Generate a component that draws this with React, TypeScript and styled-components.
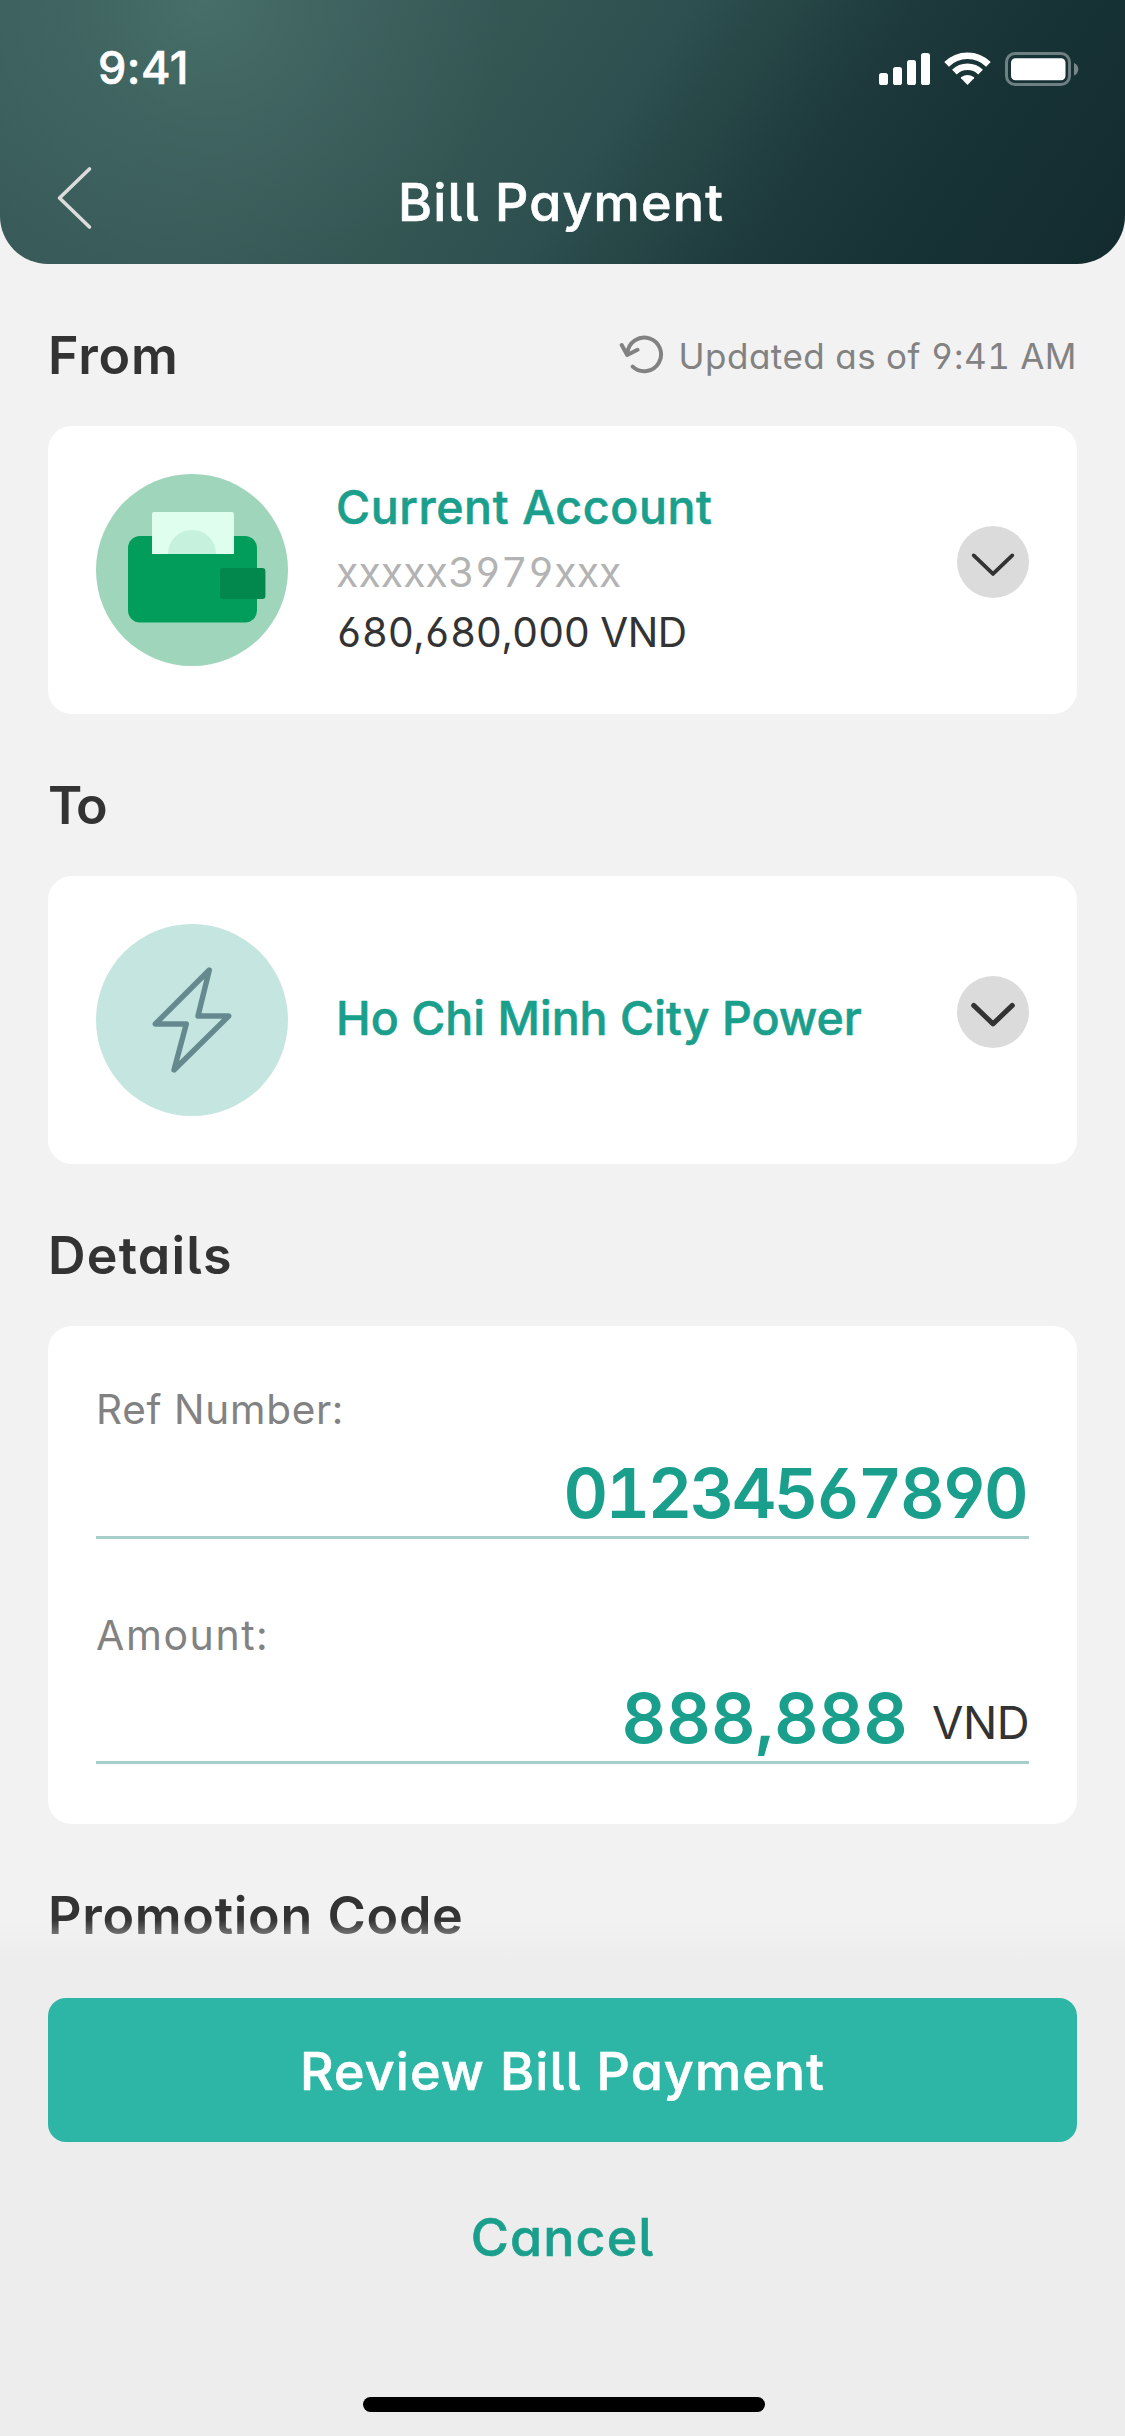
import React from "react";
import styled, { createGlobalStyle } from "styled-components";

const GlobalStyle = createGlobalStyle`
  * { box-sizing: border-box; }
  body { margin: 0; background: #f2f2f2; }
`;

const Screen = styled.div`
  position: relative;
  display: flex;
  flex-direction: column;
  width: 1125px;
  height: 2436px;
  overflow: hidden;
  background: #f2f2f2;
  color: #333333;
  font-family: Inter, "Liberation Sans", sans-serif;
  font-feature-settings: "cv03", "cv04", "cv05", "cv11", "tnum";
`;

interface TextProps {
  $size: number;
  $weight?: number;
  $color?: string;
  $track?: number;
  $line?: number;
}

const Text = styled.span<TextProps>`
  display: block;
  white-space: nowrap;
  font-size: ${(p) => p.$size}px;
  font-weight: ${(p) => p.$weight ?? 400};
  color: ${(p) => p.$color ?? "inherit"};
  letter-spacing: ${(p) => p.$track ?? 0}px;
  line-height: ${(p) => p.$line ?? 60}px;
`;

const Label = styled(Text).attrs({ $weight: 500 })`
  -webkit-text-stroke: 0.6px currentColor;
`;

const Header = styled.header`
  flex: none;
  height: 264px;
  border-radius: 0 0 48px 48px;
  background:
    radial-gradient(
      circle at 205px 0,
      rgba(110, 160, 145, 0.28) 0,
      rgba(110, 160, 145, 0.12) 140px,
      rgba(110, 160, 145, 0) 300px
    ),
    linear-gradient(
      124deg,
      #395d5b 0,
      #385a58 300px,
      #335653 460px,
      #2d4f4f 580px,
      #264545 665px,
      #1d393b 767px,
      #173336 870px,
      #132b2e 1080px
    );
`;

const StatusBar = styled.div`
  display: flex;
  justify-content: space-between;
  align-items: center;
  height: 138px;
  padding: 0 46px 0 98px;
`;

const Clock = styled(Label)`
  padding-bottom: 2px;
  font-feature-settings: normal;
`;

const StatusIcons = styled.div`
  display: flex;
  align-items: center;
  gap: 14px;
`;

const NavBar = styled.div`
  display: grid;
  grid-template-columns: 120px 1fr 120px;
  align-items: center;
  justify-items: center;
  height: 130px;
`;

const NavTitle = styled(Label)`
  margin-right: 3px;
`;

const BackButton = styled.button`
  display: flex;
  justify-self: start;
  margin-left: 56px;
  margin-bottom: 10px;
  padding: 0;
  border: 0;
  background: none;
`;

const Content = styled.main`
  display: flex;
  flex-direction: column;
  gap: 62px;
  padding: 62px 48px 0;
`;

const Section = styled.section`
  display: flex;
  flex-direction: column;
  gap: 40px;
`;

const SectionHead = styled.div`
  display: flex;
  justify-content: space-between;
  align-items: center;
  height: 60px;
`;

const SectionTitle = styled(Text).attrs({ as: "h2", $size: 52, $weight: 600 })`
  margin: 0;
`;

const Updated = styled.div`
  display: flex;
  align-items: center;
  gap: 14px;

  svg {
    margin-bottom: 4px;
  }
`;

const Card = styled.div`
  display: flex;
  align-items: center;
  gap: 48px;
  height: 288px;
  padding: 0 48px;
  border-radius: 24px;
  background: #ffffff;
`;

const CardBody = styled.div`
  flex: 1;
  padding-bottom: 4px;
`;

const Avatar = styled.div<{ $color: string }>`
  flex: none;
  width: 192px;
  height: 192px;
  border-radius: 50%;
  background: ${(p) => p.$color};
`;

const Expand = styled.button`
  flex: none;
  width: 72px;
  height: 72px;
  margin: 0 0 16px;
  padding: 0;
  border: 0;
  border-radius: 50%;
  background: #dbdbdb;
`;

const FormCard = styled.div`
  display: flex;
  flex-direction: column;
  gap: 60px;
  height: 498px;
  padding: 48px 48px 60px;
  border-radius: 24px;
  background: #ffffff;
`;

const Field = styled.div`
  height: 165px;
  border-bottom: 3px solid #a7cdc8;
`;

const FieldValue = styled.div`
  display: flex;
  justify-content: flex-end;
  align-items: flex-start;
  gap: 24px;
  padding-top: 2px;
`;

const RefValue = styled(Text)`
  padding-right: 3px;
`;

const Unit = styled(Text)`
  padding-top: 5px;
`;

const Footer = styled.footer`
  position: absolute;
  left: 0;
  right: 0;
  bottom: 0;
  display: flex;
  flex-direction: column;
  align-items: center;
  height: 516px;
  padding: 78px 48px 24px;
  background: linear-gradient(rgba(237, 237, 237, 0) 0, #ededed 42px);
`;

const PrimaryButton = styled.button`
  display: flex;
  align-items: center;
  justify-content: center;
  width: 100%;
  height: 144px;
  padding: 4px 0 0;
  border: 0;
  border-radius: 18px;
  background: #2db6a5;
  font: inherit;
  font-feature-settings: inherit;
`;

const CancelButton = styled.button`
  height: 96px;
  margin: 48px 0 0;
  padding: 0;
  border: 0;
  background: none;
  font: inherit;
  font-feature-settings: inherit;
`;

const HomeIndicator = styled.div`
  width: 402px;
  height: 15px;
  margin: auto 0 0 3px;
  border-radius: 8px;
  background: #000000;
`;

const SignalIcon = () => (
  <svg width="51" height="34" viewBox="0 0 51 34" fill="#fff">
    <rect x="0" y="21" width="9" height="12" rx="2.6" />
    <rect x="14" y="15" width="9" height="18" rx="2.6" />
    <rect x="28" y="8" width="9" height="25" rx="2.6" />
    <rect x="42" y="1" width="9" height="32" rx="2.6" />
  </svg>
);

const WifiIcon = () => (
  <svg width="47" height="34" viewBox="0 0 47 34" fill="none" stroke="#fff">
    <path d="M2.6 12.4A29.6 29.6 0 0 1 44.4 12.4" strokeWidth="6.6" />
    <path d="M10.4 20.2A18.6 18.6 0 0 1 36.6 20.2" strokeWidth="6.6" />
    <path d="M23.5 33L17 26.3Q16.6 25.6 17.3 25.1Q23.5 20.8 29.7 25.1Q30.4 25.6 30 26.3Z" fill="#fff" stroke="none" />
  </svg>
);

const BatteryIcon = () => (
  <svg width="74" height="34" viewBox="0 0 74 34">
    <rect x="1.5" y="1.5" width="63" height="31" rx="8.5" fill="none" stroke="#fff" strokeWidth="3" opacity="0.38" />
    <rect x="6" y="6.2" width="54.5" height="22" rx="4.5" fill="#fff" />
    <path d="M69 11Q73.3 12.8 73.3 17.3Q73.3 21.8 69 23.6Z" fill="#fff" opacity="0.42" />
  </svg>
);

const BackIcon = () => (
  <svg width="37" height="64" viewBox="0 0 37 64" fill="none">
    <path d="M33.5 3L3.5 32L33.5 61" stroke="#dcdcdc" strokeWidth="3.6" strokeLinecap="round" strokeLinejoin="round" />
  </svg>
);

const RefreshIcon = () => (
  <svg width="46" height="42" viewBox="0 0 46 42" fill="none" stroke="#828282" strokeWidth="4" strokeLinecap="round" strokeLinejoin="round">
    <path d="M8.5 20A16.8 16.8 0 1 1 13.7 33.6" />
    <path d="M2.7 12L8.2 22L18.5 16.8" />
  </svg>
);

const WalletIcon = () => (
  <svg width="192" height="192" viewBox="0 0 192 192">
    <rect x="32" y="62" width="129" height="86.5" rx="12" fill="#029d5b" />
    <path d="M56 80V40Q56 38 58 38H136Q138 38 138 40V80Z" fill="#e0feee" />
    <path d="M72 80A24 24 0 0 1 120 80Z" fill="#c6f1dc" />
    <rect x="124" y="94" width="45.4" height="31" rx="3" fill="#02884c" />
  </svg>
);

const BoltIcon = () => (
  <svg width="192" height="192" viewBox="0 0 192 192" fill="none">
    <path
      d="M113.3 46L59.3 100H90.3L78 146L132.7 92H102Z"
      stroke="#65898f"
      strokeWidth="5.4"
      strokeLinejoin="round"
    />
  </svg>
);

const Chevron = ({ weight }: { weight: number }) => (
  <svg width="72" height="72" viewBox="0 0 72 72" fill="none">
    <path d="M16.7 29.4L36 47.9L55.3 29.4" stroke="#333" strokeWidth={weight} strokeLinecap="round" strokeLinejoin="round" />
  </svg>
);

const teal = "#1b9f8d";
const grey = "#828282";

export default function App() {
  return (
    <Screen>
      <GlobalStyle />
      <Header>
        <StatusBar>
          <Clock $size={45} $color="#fff" $track={0.5}>9:41</Clock>
          <StatusIcons>
            <SignalIcon />
            <WifiIcon />
            <BatteryIcon />
          </StatusIcons>
        </StatusBar>
        <NavBar>
          <BackButton aria-label="Back">
            <BackIcon />
          </BackButton>
          <NavTitle $size={52} $color="#fff" $track={1.2}>Bill Payment</NavTitle>
        </NavBar>
      </Header>

      <Content>
        <Section>
          <SectionHead>
            <SectionTitle $track={0.8}>From</SectionTitle>
            <Updated>
              <RefreshIcon />
              <Text $size={35} $color={grey} $track={0.5}>Updated as of 9:41 AM</Text>
            </Updated>
          </SectionHead>
          <Card>
            <Avatar $color="#9fd5bb">
              <WalletIcon />
            </Avatar>
            <CardBody>
              <Label $size={46.5} $color={teal} $track={0.6} $line={69}>Current Account</Label>
              <Text $size={41} $color="#b3b3b3">xxxxx3979xxx</Text>
              <Text $size={40.5} $track={-0.4} $line={61}>680,680,000 VND</Text>
            </CardBody>
            <Expand aria-label="Choose account">
              <Chevron weight={3.8} />
            </Expand>
          </Card>
        </Section>

        <Section>
          <SectionHead>
            <SectionTitle $track={-2.3}>To</SectionTitle>
          </SectionHead>
          <Card>
            <Avatar $color="#c5e6e0">
              <BoltIcon />
            </Avatar>
            <CardBody>
              <Label $size={46.5} $color={teal}>Ho Chi Minh City Power</Label>
            </CardBody>
            <Expand aria-label="Choose biller">
              <Chevron weight={5} />
            </Expand>
          </Card>
        </Section>

        <Section>
          <SectionHead>
            <SectionTitle $track={1.2}>Details</SectionTitle>
          </SectionHead>
          <FormCard>
            <Field>
              <Text $size={40.5} $color={grey} $line={72} $track={0.75}>Ref Number:</Text>
              <FieldValue>
                <RefValue $size={69} $weight={600} $color={teal} $track={-2.6} $line={90}>01234567890</RefValue>
              </FieldValue>
            </Field>
            <Field>
              <Text $size={41} $color={grey} $line={72} $track={1.6}>Amount:</Text>
              <FieldValue>
                <Text $size={69} $weight={600} $color={teal} $line={90}>888,888</Text>
                <Unit $size={45.5} $weight={400} $track={-0.5} $line={90}>VND</Unit>
              </FieldValue>
            </Field>
          </FormCard>
        </Section>

        <Section>
          <SectionHead>
            <SectionTitle $track={0.7}>Promotion Code</SectionTitle>
          </SectionHead>
        </Section>
      </Content>

      <Footer>
        <PrimaryButton>
          <Label $size={52} $color="#fff" $track={1.1}>Review Bill Payment</Label>
        </PrimaryButton>
        <CancelButton>
          <Label $size={52} $color={teal} $track={1.1}>Cancel</Label>
        </CancelButton>
        <HomeIndicator />
      </Footer>
    </Screen>
  );
}
